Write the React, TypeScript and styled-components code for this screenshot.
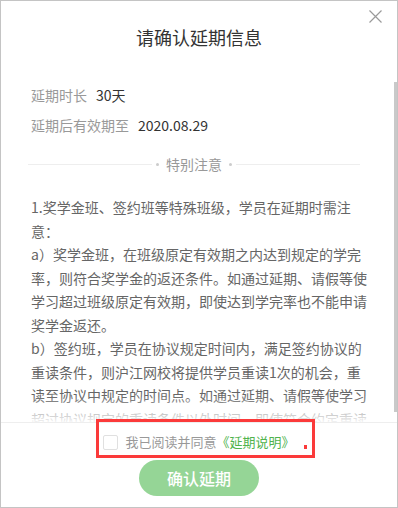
import React from "react";
import styled, { createGlobalStyle } from "styled-components";

const Global = createGlobalStyle`
  html, body { margin: 0; padding: 0; background: #fff; }
  body { font-family: "Noto Sans CJK SC", "Noto Sans", sans-serif; }
  * { box-sizing: border-box; }
`;

const Modal = styled.div`
  position: relative;
  width: 398px;
  height: 508px;
  border: 1px solid #c4c4c4;
  background: #fff;
  display: flex;
  flex-direction: column;
  overflow: hidden;
`;

const Header = styled.div`
  position: relative;
  height: 74px;
  flex: none;
  padding-top: 24px;
  text-align: center;
`;

const Title = styled.h2`
  margin: 0;
  font-size: 18px;
  line-height: 24px;
  font-weight: 400;
  color: #333;
`;

const Close = styled.button`
  position: absolute;
  top: 9px;
  right: 15px;
  width: 13px;
  height: 13px;
  padding: 0;
  border: none;
  background: transparent;
  display: flex;
  cursor: pointer;
`;

const ScrollWrap = styled.div`
  position: relative;
  flex: 1;
  min-height: 0;
`;

const Content = styled.div`
  height: 100%;
  overflow: hidden;
  padding: 5px 30px 0 30px;
`;

const InfoRow = styled.div`
  display: flex;
  gap: 9px;
  font-size: 14px;
  line-height: 30px;
`;

const Label = styled.span`
  color: #999;
`;

const Value = styled.span`
  color: #333;
`;

const Divider = styled.div`
  display: flex;
  align-items: center;
  margin: 14px 7px 22px -3px;
  height: 20px;
  font-size: 14px;
  color: #999;
  gap: 4px;
`;

const Line = styled.span`
  flex: 1;
  height: 1px;
  background: #eee;
`;

const Dot = styled.span`
  width: 3px;
  height: 3px;
  border-radius: 50%;
  background: #ccc;
`;

const DividerText = styled.span`
  padding: 0 3px;
  line-height: 20px;
`;

const Notice = styled.p`
  margin: 0;
  font-size: 14px;
  line-height: 23.5px;
  color: #666;
  width: 336px;
`;

const Fade = styled.div`
  position: absolute;
  left: 0;
  right: 0;
  bottom: 0;
  height: 26px;
  background: linear-gradient(rgba(255, 255, 255, 0), rgba(255, 255, 255, 0.92));
  pointer-events: none;
`;

const Thumb = styled.div`
  position: absolute;
  right: 0;
  top: 7px;
  width: 3px;
  height: 330px;
  background: #c9c9c9;
`;

const Footer = styled.div`
  flex: none;
  border-top: 1px solid #eee;
  padding: 9px 0 11px;
  display: flex;
  flex-direction: column;
  align-items: center;
  gap: 8px;
`;

const Agree = styled.label`
  display: flex;
  align-items: center;
  gap: 7px;
  height: 20px;
  font-size: 13px;
  color: #999;
  cursor: pointer;
`;

const Check = styled.span`
  width: 15px;
  height: 15px;
  border: 1px solid #e0e0e0;
  border-radius: 2px;
  background: #fff;
`;

const AgreeText = styled.span`
  line-height: 20px;
`;

const Link = styled.a`
  color: #4fb34d;
  text-decoration: none;
`;

const Confirm = styled.button`
  width: 120px;
  height: 36px;
  border: none;
  border-radius: 18px;
  background: #95d596;
  color: #fff;
  font-family: inherit;
  font-size: 16px;
  font-weight: 500;
  cursor: not-allowed;
`;

const Highlight = styled.div`
  position: absolute;
  left: 95px;
  top: 418px;
  width: 219px;
  height: 39px;
  border: 3px solid #fb3a3a;
  pointer-events: none;
`;

const RedDot = styled.div`
  position: absolute;
  left: 303px;
  top: 444px;
  width: 3px;
  height: 4px;
  background: #fb3a3a;
`;

export default function App() {
  return (
    <>
      <Global />
      <Modal>
        <Header>
          <Title>请确认延期信息</Title>
          <Close aria-label="关闭">
            <svg width="13" height="13" viewBox="0 0 13 13">
              <path d="M0.5 0.5L12.5 12.5M12.5 0.5L0.5 12.5" stroke="#9a9a9a" strokeWidth="1.2" fill="none" />
            </svg>
          </Close>
        </Header>
        <ScrollWrap>
          <Content>
            <InfoRow>
              <Label>延期时长</Label>
              <Value>30天</Value>
            </InfoRow>
            <InfoRow>
              <Label>延期后有效期至</Label>
              <Value>2020.08.29</Value>
            </InfoRow>
            <Divider>
              <Line />
              <Dot />
              <DividerText>特别注意</DividerText>
              <Dot />
              <Line />
            </Divider>
            <Notice>1.奖学金班、签约班等特殊班级，学员在延期时需注意：</Notice>
            <Notice>
              a）奖学金班，在班级原定有效期之内达到规定的学完率，则符合奖学金的返还条件。如通过延期、请假等使学习超过班级原定有效期，即使达到学完率也不能申请奖学金返还。
            </Notice>
            <Notice>
              b）签约班，学员在协议规定时间内，满足签约协议的重读条件，则沪江网校将提供学员重读1次的机会，重读至协议中规定的时间点。如通过延期、请假等使学习超过协议规定的重读条件以外时间，即使符合约定重读条件也不能申请重读。
            </Notice>
            <Notice>2.延期成功后，课程有效期将相应顺延。</Notice>
          </Content>
          <Fade />
          <Thumb />
        </ScrollWrap>
        <Footer>
          <Agree>
            <Check />
            <AgreeText>
              我已阅读并同意<Link href="#">《延期说明》</Link>
            </AgreeText>
          </Agree>
          <Confirm>确认延期</Confirm>
        </Footer>
        <Highlight />
        <RedDot />
      </Modal>
    </>
  );
}
